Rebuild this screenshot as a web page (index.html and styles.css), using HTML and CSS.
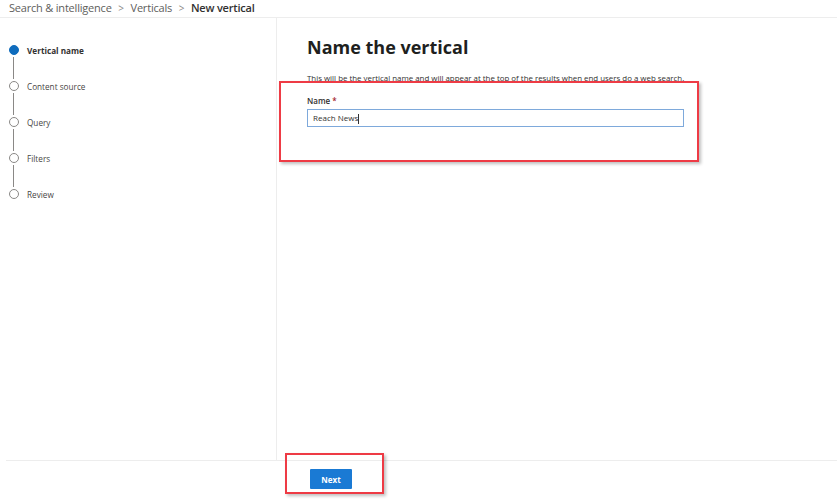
FILE: index.html
```html
<!DOCTYPE html>
<html lang="en">
<head>
  <meta charset="UTF-8" />
  <meta name="viewport" content="width=device-width, initial-scale=1.0" />
  <title>New vertical</title>
  <link rel="stylesheet" href="styles.css">
</head>
<body>
  <div class="breadcrumb">
    <span>Search &amp; intelligence</span>
    <span class="sep">&gt;</span>
    <span>Verticals</span>
    <span class="sep">&gt;</span>
    <span class="current">New vertical</span>
  </div>

  <div class="layout">
    <div class="sidebar">
      <ul class="steps">
        <li class="step active"><span class="dot"></span>Vertical name</li>
        <li class="step"><span class="dot"></span>Content source</li>
        <li class="step"><span class="dot"></span>Query</li>
        <li class="step"><span class="dot"></span>Filters</li>
        <li class="step last"><span class="dot"></span>Review</li>
      </ul>
    </div>

    <div class="content">
      <h1>Name the vertical</h1>
      <p class="desc">This will be the vertical name and will appear at the top of the results when end users do a web search.</p>
      <div class="field">
        <label class="label">Name <span class="req">*</span></label>
        <div class="input">Reach News<span class="caret"></span></div>
      </div>
      <div class="highlight field-box"></div>
    </div>
  </div>

  <div class="footer">
    <button class="btn-primary">Next</button>
    <div class="highlight btn-box"></div>
  </div>
</body>
</html>
```

FILE: styles.css
```css
body {
  margin: 0;
  font-family: 'Segoe UI', 'Open Sans', 'Noto Sans', sans-serif;
  background-color: #fff;
  color: #323130;
  width: 837px;
  height: 499px;
  overflow: hidden;
  position: relative;
}

.breadcrumb {
  height: 18px;
  box-sizing: border-box;
  border-bottom: 1px solid #ededed;
  padding-left: 9px;
  font-size: 11px;
  line-height: 15px;
  letter-spacing: -0.2px;
  color: #605e5c;
  white-space: nowrap;
}

.breadcrumb .sep {
  margin: 0 4px;
  font-size: 10px;
  color: #8a8886;
}

.breadcrumb .current {
  color: #323130;
  font-weight: 600;
}

.layout {
  display: flex;
  height: 442px;
}

.sidebar {
  width: 276px;
  flex-shrink: 0;
  border-right: 1px solid #ededed;
}

.steps {
  list-style: none;
  margin: 0;
  padding: 27px 0 0 9px;
}

.step {
  position: relative;
  height: 36px;
  display: flex;
  align-items: flex-start;
  font-size: 8.2px;
  line-height: 11px;
  color: #484644;
}

.step .dot {
  width: 8px;
  height: 8px;
  border: 1px solid #8a8886;
  border-radius: 50%;
  margin-right: 8px;
  flex-shrink: 0;
  background: #fff;
}

.step::after {
  content: "";
  position: absolute;
  left: 4px;
  top: 12px;
  width: 1px;
  height: 22px;
  background: #8a8886;
}

.step.last::after {
  display: none;
}

.step.active {
  font-weight: 700;
  color: #323130;
}

.step.active .dot {
  background: #0f6cbd;
  border-color: #0f6cbd;
}

.content {
  position: relative;
  flex: 1;
  padding-left: 30px;
}

h1 {
  margin: 17px 0 0;
  font-size: 18px;
  line-height: 24px;
  font-weight: 700;
  color: #201f1e;
}

.desc {
  margin: 14px 0 0;
  font-size: 7.9px;
  line-height: 10px;
  color: #323130;
}

.field {
  margin-top: 13px;
}

.label {
  display: block;
  font-size: 8px;
  font-weight: 600;
  line-height: 10px;
  color: #323130;
}

.req {
  color: #a4262c;
}

.input {
  margin-top: 3px;
  width: 377px;
  height: 18px;
  box-sizing: border-box;
  border: 1px solid #7ea9db;
  font-size: 8px;
  line-height: 16px;
  padding-left: 5px;
  color: #323130;
}

.caret {
  display: inline-block;
  width: 1px;
  height: 10px;
  background: #323130;
  vertical-align: middle;
}

.footer {
  position: relative;
  margin-left: 6px;
  border-top: 1px solid #ededed;
  padding: 8px 0 0 304px;
}

.btn-primary {
  display: block;
  width: 42px;
  height: 20px;
  border: none;
  border-radius: 1px;
  background: #1a7ad4;
  color: #fff;
  font-family: inherit;
  font-size: 8px;
  font-weight: 700;
  padding: 0;
}

.highlight {
  position: absolute;
  border: 2px solid #ee3b45;
  box-shadow: 2px 2px 3px rgba(0, 0, 0, 0.25);
}

.field-box {
  left: 2px;
  top: 63px;
  width: 416px;
  height: 77px;
}

.btn-box {
  left: 279px;
  top: -8px;
  width: 95px;
  height: 37px;
}
```
